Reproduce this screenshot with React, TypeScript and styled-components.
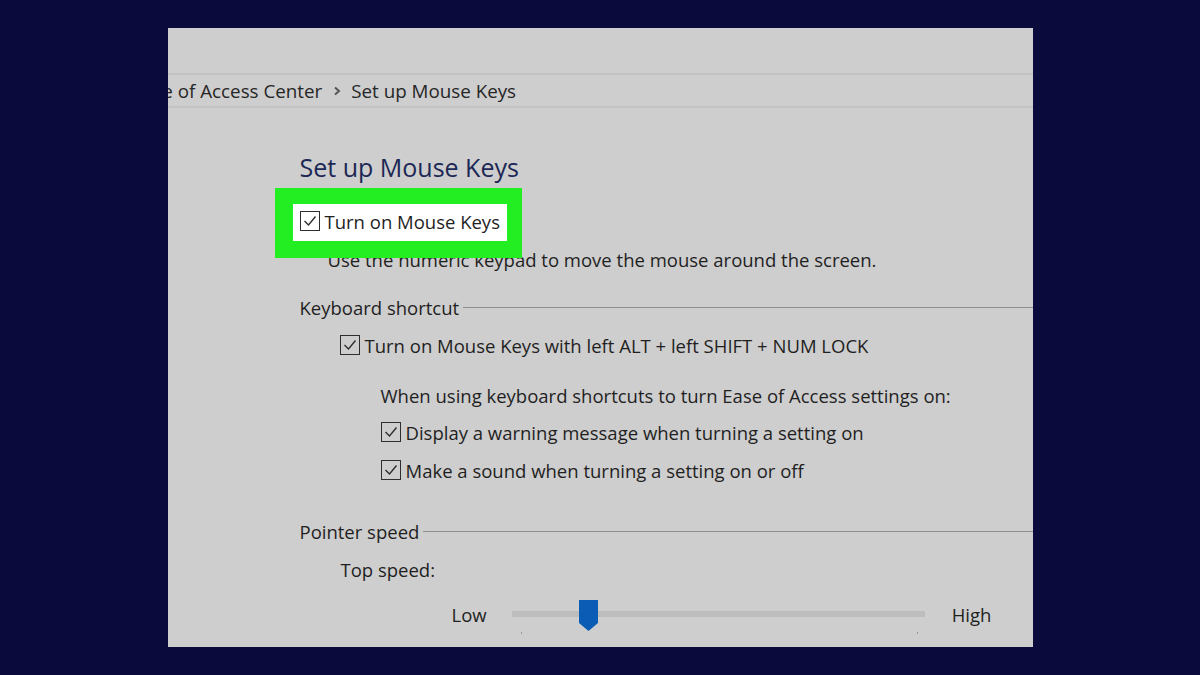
import styled, { createGlobalStyle } from "styled-components";

const GlobalStyle = createGlobalStyle`
  html, body {
    margin: 0;
    padding: 0;
    background: #0b0a3c;
  }
  body {
    font-family: "Open Sans", "Noto Sans", sans-serif;
    color: #1f1f1f;
  }
`;

const Page = styled.div`
  width: 1200px;
  height: 675px;
  display: flex;
  align-items: center;
  justify-content: center;
  background: #0b0a3c;
`;

const Panel = styled.div`
  position: relative;
  width: 865px;
  height: 619px;
  background: #cecece;
  display: flex;
  flex-direction: column;
  overflow: hidden;
`;

const TopStrip = styled.div`
  height: 45px;
  border-bottom: 2px solid #c3c3c3;
`;

const Breadcrumb = styled.div`
  height: 31px;
  border-bottom: 2px solid #c3c3c3;
  display: flex;
  align-items: center;
  white-space: nowrap;
  font-size: 18.8px;
  color: #262626;
`;

const Crumb = styled.span<{ $offset?: number }>`
  margin-left: ${(p) => p.$offset ?? 0}px;
`;

const Chevron = styled.svg`
  width: 10px;
  height: 10px;
  margin: 0 9px 0 10px;
`;

const Content = styled.div`
  position: relative;
  padding-left: 132px;
  display: flex;
  flex-direction: column;
`;

const Title = styled.div`
  margin-top: 42px;
  height: 34px;
  line-height: 34px;
  font-size: 25px;
  color: #1c2855;
`;

const Row = styled.div<{ $indent?: number; $top?: number }>`
  display: flex;
  align-items: center;
  gap: 5px;
  margin-left: ${(p) => p.$indent ?? 0}px;
  margin-top: ${(p) => p.$top ?? 0}px;
  height: 26px;
  font-size: 18.5px;
  white-space: nowrap;
`;

const Box = styled.span`
  width: 18px;
  height: 18px;
  border: 1.5px solid #2e2e2e;
  display: inline-flex;
  align-items: center;
  justify-content: center;
  flex: none;
`;

const Section = styled.div<{ $top: number }>`
  display: flex;
  align-items: center;
  margin-top: ${(p) => p.$top}px;
  height: 26px;
  font-size: 18.5px;
  white-space: nowrap;
`;

const Rule = styled.div`
  flex: 1;
  height: 1px;
  background: #8f8f8f;
  margin-left: 4px;
`;

const Highlight = styled.div`
  position: absolute;
  left: 107px;
  top: 80px;
  width: 214px;
  height: 37px;
  border-style: solid;
  border-color: #22ee22;
  border-width: 16px 15px 17px 18px;
  background: #fff;
`;

const HighlightRow = styled.div`
  position: absolute;
  left: 7px;
  top: 4px;
  display: flex;
  align-items: center;
  gap: 5px;
  height: 26px;
  font-size: 18.5px;
  white-space: nowrap;
`;

const SliderRow = styled.div`
  display: flex;
  align-items: center;
  margin-left: 152px;
  margin-top: 17px;
  height: 30px;
  font-size: 18.5px;
`;

const Track = styled.div`
  position: relative;
  width: 413px;
  height: 6px;
  background: #bdbdbd;
  margin: 0 27px 0 25px;
`;

const Thumb = styled.svg`
  position: absolute;
  left: 67px;
  top: -11px;
`;

const Tick = styled.span<{ $left: number }>`
  position: absolute;
  left: ${(p) => p.$left}px;
  top: 21px;
  width: 1px;
  height: 2px;
  background: #9a9a9a;
`;

function Check() {
  return (
    <Box>
      <svg width="16" height="16" viewBox="0 0 16 16">
        <path d="M2.5 8 L6.5 12 L13.5 3.5" fill="none" stroke="#2e2e2e" strokeWidth="1.4" />
      </svg>
    </Box>
  );
}

export default function App() {
  return (
    <Page>
      <GlobalStyle />
      <Panel>
        <TopStrip />
        <Breadcrumb>
          <Crumb $offset={-35}>Ease of Access Center</Crumb>
          <Chevron viewBox="0 0 10 10">
            <path d="M3 1.5 L7 5 L3 8.5" fill="none" stroke="#555" strokeWidth="2" />
          </Chevron>
          <Crumb>Set up Mouse Keys</Crumb>
        </Breadcrumb>
        <Content>
          <Title>Set up Mouse Keys</Title>
          <Row $top={24}>
            <Check />
            <span>Turn on Mouse Keys</span>
          </Row>
          <Row $indent={28} $top={12}>
            <span>Use the numeric keypad to move the mouse around the screen.</span>
          </Row>
          <Section $top={22}>
            <span>Keyboard shortcut</span>
            <Rule />
          </Section>
          <Row $indent={40} $top={12}>
            <Check />
            <span>Turn on Mouse Keys with left ALT + left SHIFT + NUM LOCK</span>
          </Row>
          <Row $indent={81} $top={24}>
            <span>When using keyboard shortcuts to turn Ease of Access settings on:</span>
          </Row>
          <Row $indent={81} $top={11}>
            <Check />
            <span>Display a warning message when turning a setting on</span>
          </Row>
          <Row $indent={81} $top={12}>
            <Check />
            <span>Make a sound when turning a setting on or off</span>
          </Row>
          <Section $top={35}>
            <span>Pointer speed</span>
            <Rule />
          </Section>
          <Row $indent={41} $top={12}>
            <span>Top speed:</span>
          </Row>
          <SliderRow>
            <span>Low</span>
            <Track>
              <Thumb width="19" height="31" viewBox="0 0 19 31">
                <path d="M0 0 H19 V23 L9.5 31 L0 23 Z" fill="#0b5cb5" />
              </Thumb>
              <Tick $left={9} />
              <Tick $left={405} />
            </Track>
            <span>High</span>
          </SliderRow>
          <Highlight>
            <HighlightRow>
              <Check />
              <span>Turn on Mouse Keys</span>
            </HighlightRow>
          </Highlight>
        </Content>
      </Panel>
    </Page>
  );
}
